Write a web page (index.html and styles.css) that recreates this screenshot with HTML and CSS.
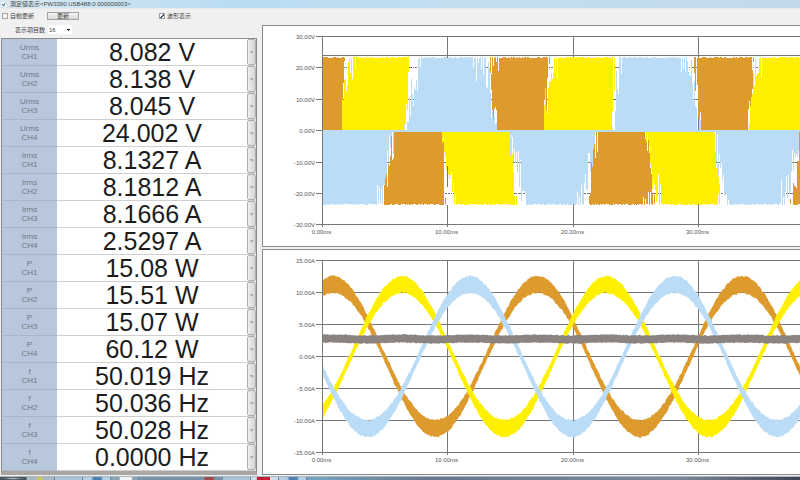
FILE: index.html
```html
<!DOCTYPE html>
<html lang="ja">
<head>
<meta charset="utf-8">
<title>測定値表示</title>
<link rel="stylesheet" href="styles.css">
</head>
<body>
<header class="titlebar">
  <svg class="app-icon" viewBox="0 0 6 6" aria-hidden="true"><rect width="6" height="6" fill="#f4f8fa"/><path d="M1 3h1l1 2 2-4" stroke="#204a58" fill="none"/></svg>
  <h1>測定値表示&lt;PW3390 USB488:0 000000003&gt;</h1>
</header>
<main class="workspace">
  <section class="readings">
    <form class="controls">
      <div class="control-row">
        <label class="check"><input type="checkbox">自動更新</label>
        <button class="refresh" type="button">更新</button>
        <label class="check wave-check"><input type="checkbox" checked>波形表示</label>
      </div>
      <div class="control-row count-row">
        <label for="count">表示項目数</label>
        <select id="count"><option>16</option></select>
      </div>
    </form>
    <table class="values"><tbody id="values"></tbody></table>
  </section>
  <section class="charts">
    <div class="chart"><svg id="voltage" class="plot plot-voltage" role="img" aria-label="V"></svg></div>
    <div class="chart"><svg id="current" class="plot plot-current" role="img" aria-label="A"></svg></div>
  </section>
</main>
<footer class="taskbar">
  <i class="start"></i><i class="pin y"></i><i class="pin"></i><i class="pin b"></i><i class="task w"></i><i class="task"></i><i class="task"></i><i class="task r"></i><i class="pin"></i><i class="pin red"></i><i class="pin b"></i><i class="rest"></i>
</footer>
<script src="app.js"></script>
</body>
</html>
```
FILE: styles.css
```css
* { box-sizing: border-box; }

body {
  margin: 0;
  min-height: 100vh;
  display: flex;
  flex-direction: column;
  overflow: hidden;
  background: #f0f0f0;
  color: #444;
  font: 6px/8px "Liberation Sans", "Noto Sans CJK JP", sans-serif;
}

button, select, input { font: inherit; color: inherit; margin: 0; }

.titlebar {
  display: flex;
  align-items: center;
  gap: 4px;
  height: 9px;
  padding: 0 1px;
  background: linear-gradient(90deg, #d8e8f2, #b9dcf2 30%, #c4dff0 60%, #c2d9ea);
  border-bottom: 1px solid #e4eaee;
}
.titlebar h1 { margin: 0; font-size: 6px; font-weight: 400; white-space: nowrap; }
.app-icon { width: 5px; height: 5px; }

.workspace {
  flex: 1;
  display: grid;
  grid-template-columns: 257px minmax(0, 1fr);
  gap: 5px;
}

.readings { display: flex; flex-direction: column; }
.controls { height: 29px; padding: 2px 0 0 2px; }
.control-row { display: flex; align-items: center; height: 9px; white-space: nowrap; }
.check { display: flex; align-items: center; gap: 2px; width: 45px; }
.check input {
  appearance: none;
  width: 6px;
  height: 6px;
  border: 1px solid #a4a4a4;
  background: #fafafa;
}
.check input:checked {
  background: linear-gradient(135deg, #fff 40%, #45536e 40% 70%, #fff 70%);
}
.wave-check { margin-left: 80px; }
.refresh {
  width: 32px;
  height: 8px;
  padding: 0;
  line-height: 6px;
  border: 1px solid #a2a2a2;
  background: linear-gradient(#f4f4f4, #d8d8d8);
}
.count-row { gap: 3px; margin-top: 5px; padding-left: 13px; }
#count {
  appearance: none;
  width: 24px;
  height: 9px;
  padding: 0 1px;
  border: 0;
  font-size: 6px;
  background: linear-gradient(#222, #222) 19px 4px / 3px 1px no-repeat,
    linear-gradient(#222, #222) 20px 5px / 1px 1px no-repeat, #fff;
}

.values {
  width: calc(100% - 1px);
  margin-left: 1px;
  border-collapse: separate;
  border-spacing: 0;
  table-layout: fixed;
  background: #fff;
  border: 1px solid #8c8c8c;
  border-width: 1px 1px 4px;
  border-bottom-color: #aaa6a4;
}
.values tr { height: 27px; }
.values th, .values td { padding: 0; border-bottom: 1px solid #cfcfcf; }
.values th {
  width: 55px;
  background: #b9c7dc;
  border-color: #a8b5ca;
  color: #6f7888;
  font-size: 8px;
  line-height: 9px;
  font-weight: 400;
}
.values th span { display: block; }
.values .value {
  color: #1c1c1c;
  font-size: 25px;
  line-height: 26px;
  text-align: center;
}
.values .more { width: 9px; }
.more button {
  display: block;
  width: 9px;
  height: 26px;
  padding: 0;
  border: 1px solid #b0adad;
  border-radius: 2px;
  background: linear-gradient(90deg, #f0efef, #d6d3d3);
  color: #555;
}

.charts { display: flex; flex-direction: column; gap: 2px; padding-top: 16px; }
.chart {
  overflow: hidden;
  background: #fff;
  border: 1px solid #8a8a8a;
  border-right: 0;
}
.plot { display: block; width: 100%; }
.plot-voltage { height: 220px; }
.plot-current { height: 224px; }
.plot text { fill: #555; font-size: 6px; }
.grid { stroke: #777; fill: none; shape-rendering: crispEdges; }
.bars { fill: none; shape-rendering: crispEdges; }

.taskbar {
  display: flex;
  gap: 1px;
  height: 4px;
  background: #6f8799;
  border-top: 1px solid #a9b7c2;
}
.taskbar i { display: block; }
.start { width: 26px; background: radial-gradient(#b9c2c8, #46525c 60%); }
.pin { width: 27px; background: #a9c4d6; }
.y { background: linear-gradient(90deg, #a8b8c0 30%, #d9c93b 50%, #a8b8c0 60%); }
.b { background: linear-gradient(90deg, #b2d0e4 30%, #4f7fae 40% 65%, #b2d0e4 75%); }
.task { width: 27px; background: #7793a7; }
.w { background: linear-gradient(90deg, #8aa4b6 30%, #f2f4f5 35% 75%, #8aa4b6 80%); }
.r { background: linear-gradient(90deg, #7793a7 30%, #a8484c 40% 65%, #7793a7 75%); }
.red { background: linear-gradient(90deg, #cfdfe8 20%, #c31f30 22% 70%, #cfdfe8 72%); }
.rest { flex: 1; background: linear-gradient(90deg, #74a5c0, #68788c 25%, #7d879b 75%, #3f4552); }
```
FILE: app.js
```js
const readings = [
  ["Urms", "CH1", "8.082 V"], ["Urms", "CH2", "8.138 V"],
  ["Urms", "CH3", "8.045 V"], ["Urms", "CH4", "24.002 V"],
  ["Irms", "CH1", "8.1327 A"], ["Irms", "CH2", "8.1812 A"],
  ["Irms", "CH3", "8.1666 A"], ["Irms", "CH4", "2.5297 A"],
  ["P", "CH1", "15.08 W"], ["P", "CH2", "15.51 W"],
  ["P", "CH3", "15.07 W"], ["P", "CH4", "60.12 W"],
  ["f", "CH1", "50.019 Hz"], ["f", "CH2", "50.036 Hz"],
  ["f", "CH3", "50.028 Hz"], ["f", "CH4", "0.0000 Hz"]
];
document.getElementById("values").innerHTML = readings.map(([q, ch, v]) =>
  `<tr><th scope="row"><span>${q}</span><span>${ch}</span></th><td class="value">${v}</td>` +
  `<td class="more"><button type="button">&gt;</button></td></tr>`).join("");

const ORANGE = "#dd9b2d", YELLOW = "#fff000", BLUE = "#badcf7", GRAY = "#8a8380";

// Repeatable noise, so the traces look the same on every load.
let seed = 7;
const noise = () => (seed = (seed * 16807) % 2147483647) / 2147483647;

const LEFT = 59, STEP = 125.3, END = 700;

function axes(top, gap, labels) {
  const bottom = top + gap * (labels.length - 1);
  let lines = "", text = "";
  labels.forEach((label, i) => {
    const y = Math.round(top + gap * i) + 0.5;
    lines += `M${LEFT - 6} ${y}H${END}`;
    text += `<text x="${LEFT - 7}" y="${y + 2}" text-anchor="end">${label}</text>`;
  });
  ["0.00ms", "10.00ms", "20.00ms", "30.00ms"].forEach((label, i) => {
    const x = Math.round(LEFT + STEP * i) + 0.5;
    lines += `M${x} ${top}V${bottom + 3}`;
    text += `<text x="${x - 1}" y="${bottom + 10}" text-anchor="middle">${label}</text>`;
  });
  return `<path class="grid" d="${lines}"/>${text}`;
}

// A block switched between two levels: the left and right edges slope from
// the upper to the lower level and are ragged column by column.
function block([color, lt, lb, rt, rb], y0, y1, peakTop) {
  let d = "";
  const h = y1 - y0;
  for (let x = Math.min(lt, lb) - 2; x <= Math.max(rt, rb) + 2; x++) {
    if (x < LEFT + 1) continue;
    let a = y0, b = y1;
    if (peakTop) a += Math.floor(noise() * 2); else b -= Math.floor(noise() * 2);
    const jitter = (noise() - 0.5) * 48;
    if (x <= Math.max(lt, lb) && lt !== lb) {
      const y = y0 + h * (x - lt) / (lb - lt) + jitter;
      if (lt > lb) a = Math.max(a, y); else b = Math.min(b, y);
    }
    if (x >= Math.min(rt, rb)) {
      const y = y0 + h * (x - rt) / (rb - rt) + jitter;
      if (rt > rb) b = Math.min(b, y); else a = Math.max(a, y);
    }
    if (b > a) d += `M${x + 0.5} ${Math.round(a)}V${Math.round(b)}`;
  }
  return `<path class="bars" stroke="${color}" d="${d}"/>`;
}

// White notches reaching in from the outer level around each hand-over.
function notches(x0, x1, y, dir) {
  let d = "";
  for (let x = x0; x < x1; x += 2 + Math.floor(noise() * 2)) {
    d += `M${x + 0.5} ${y}v${Math.round(dir * (5 + noise() * 20))}`;
  }
  return `<path class="bars" stroke="#fff" d="${d}"/>`;
}

// Each block: colour, left edge (top, bottom), right edge (top, bottom).
const upper = [
  [BLUE, 157, 142, 222, 233], [BLUE, 357, 349, 424, 436],
  [YELLOW, 85, 72, 147, 141], [YELLOW, 289, 279, 352, 348], [YELLOW, 494, 484, 560, 556],
  [ORANGE, 59, 59, 81, 78], [ORANGE, 225, 233, 285, 280], [ORANGE, 431, 438, 490, 484]
];
const lower = [
  [BLUE, 59, 59, 130, 119], [BLUE, 247, 261, 332, 319], [BLUE, 451, 463, 535, 521],
  [YELLOW, 178, 190, 246, 253], [YELLOW, 380, 397, 450, 456],
  [ORANGE, 131, 121, 179, 182], [ORANGE, 334, 325, 382, 391], [ORANGE, 537, 528, 590, 600]
];

document.getElementById("voltage").innerHTML =
  axes(10, 31.4, ["30.00V", "20.00V", "10.00V", "0.00V", "-10.00V", "-20.00V", "-30.00V"]) +
  `<path class="grid" d="M${LEFT} 29.5H${END}"/>` +
  `<path class="bars" stroke="${BLUE}" stroke-width="2" d="M${LEFT + 1} 105H${END}"/>` +
  upper.map(s => block(s, 31, 104, true)).join("") +
  lower.map(s => block(s, 106, 179, false)).join("") +
  [[82, 94], [146, 158], [210, 222], [226, 236], [285, 296], [350, 361], [418, 428], [489, 500]]
    .map(([a, b]) => notches(a, b, 31, 1)).join("") +
  [[114, 121], [181, 194], [252, 264], [314, 324], [380, 396], [455, 468], [518, 527]]
    .map(([a, b]) => notches(a, b, 179, -1)).join("");

const PERIOD = 204.6, ZERO = 106.5;

function band(color, centre, half, rough) {
  const up = [], down = [];
  for (let x = LEFT + 1; x <= END; x++) {
    const c = centre(x), h = half(x);
    up.push(`${x} ${(c - h - noise() * rough).toFixed(1)}`);
    down.unshift(`${x} ${(c + h + noise() * rough).toFixed(1)}`);
  }
  return `<path fill="${color}" d="M${up.join("L")}L${down.join("L")}Z"/>`;
}

const sine = (color, peak) => {
  const c = x => Math.cos((x - peak) / PERIOD * 2 * Math.PI);
  return band(color, x => ZERO - 72 * c(x), x => 3.5 + 4 * c(x) ** 2, 2);
};

document.getElementById("current").innerHTML =
  axes(10, 32, ["15.00A", "10.00A", "5.00A", "0.00A", "-5.00A", "-10.00A", "-15.00A"]) +
  sine(ORANGE, 70) + sine(YELLOW, 139) + sine(BLUE, 207) +
  band(GRAY, x => 89 - Math.cos((x - 70) / PERIOD * 6 * Math.PI) * 0.5, () => 3.5, 1);
```
